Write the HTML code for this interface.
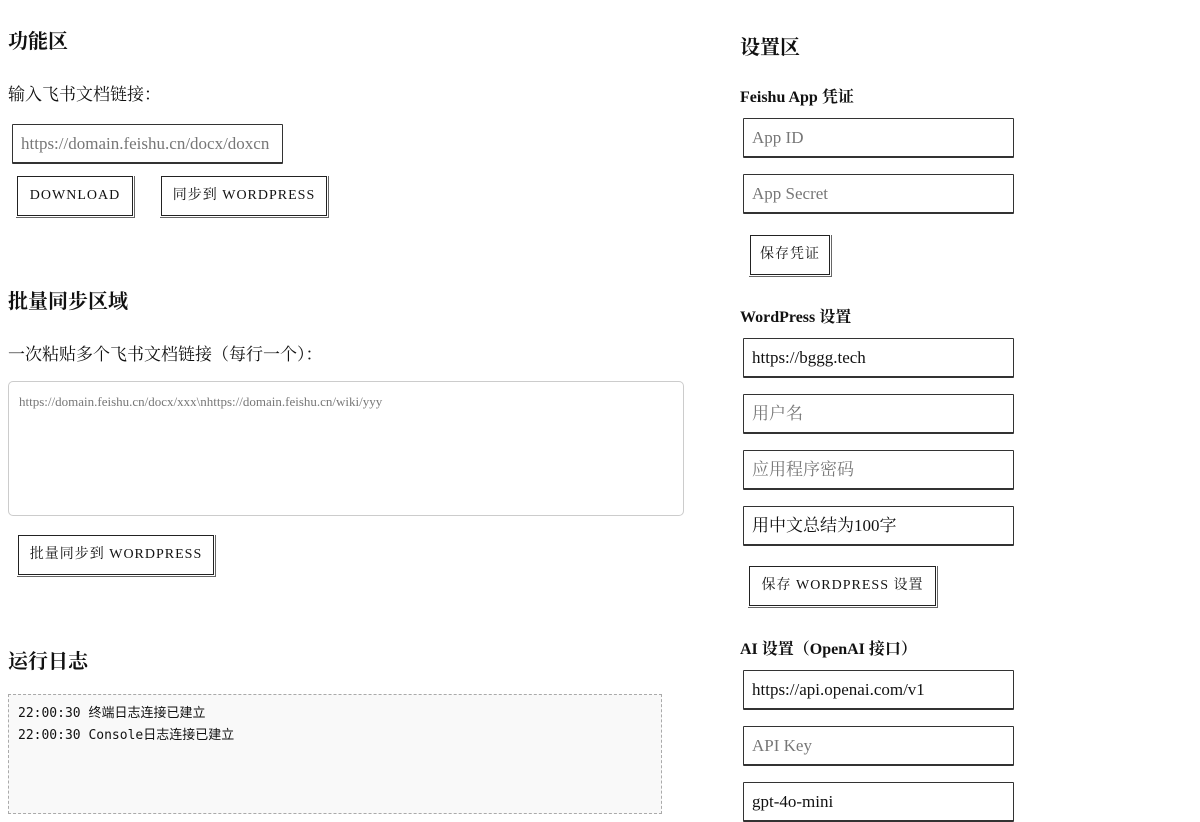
<!DOCTYPE html>
<html><head><meta charset="utf-8"><style>
body{margin:0;width:1200px;height:801px;overflow:hidden;background:#fff;position:relative;font-family:"Liberation Serif","Noto Serif CJK SC",serif;color:#111}
.a{position:absolute;white-space:nowrap}
h2{position:absolute;margin:0;font-size:20px;font-weight:bold;white-space:nowrap}
h3{position:absolute;margin:0;font-size:16px;font-weight:bold;white-space:nowrap}
.lbl{position:absolute;font-size:17px;white-space:nowrap}
.in{position:absolute;box-sizing:border-box;border:1.5px solid #333;border-bottom-width:2px;border-radius:1px;height:40px;font-size:17px;padding:0 8px;line-height:37px;color:#777;background:#fff}
.in.v{color:#111}
.btn{position:absolute;box-sizing:border-box;border:1.5px solid #222;height:40px;font-size:14px;letter-spacing:1px;line-height:38px;text-align:center;background:#fff}
.btn:after{content:"";position:absolute;left:-2px;top:-1px;right:-3px;bottom:-3px;border:1px solid #666;border-left:none;border-top:none;pointer-events:none}
</style></head><body>
<h2 style="left:8px;top:25px">功能区</h2>
<div class="lbl" style="left:8px;top:80px">输入飞书文档链接：</div>
<div class="in" style="left:12px;top:124px;width:271px;height:40px">https://domain.feishu.cn/docx/doxcn</div>
<div class="btn" style="left:17px;top:176px;width:116px">DOWNLOAD</div>
<div class="btn" style="left:161px;top:176px;width:166px">同步到 WORDPRESS</div>

<h2 style="left:8px;top:285px">批量同步区域</h2>
<div class="lbl" style="left:8px;top:340px">一次粘贴多个飞书文档链接（每行一个）：</div>
<div class="a" style="left:8px;top:381px;width:676px;height:135px;box-sizing:border-box;border:1px solid #ccc;border-radius:5px;font-size:13px;color:#777;padding:12px 10px">https://domain.feishu.cn/docx/xxx\nhttps://domain.feishu.cn/wiki/yyy</div>
<div class="btn" style="left:18px;top:535px;width:196px">批量同步到 WORDPRESS</div>

<h2 style="left:8px;top:645px">运行日志</h2>
<div class="a" style="left:8px;top:694px;width:654px;height:120px;box-sizing:border-box;border:1px dashed #aaa;background:#f9f9f9;font-family:'DejaVu Sans Mono','Noto Sans CJK SC',monospace;font-size:13px;line-height:22px;padding:8px 9px;color:#111">22:00:30 终端日志连接已建立<br>22:00:30 Console日志连接已建立</div>

<h2 style="left:740px;top:31px">设置区</h2>
<h3 style="left:740px;top:84px">Feishu App 凭证</h3>
<div class="in" style="left:743px;top:118px;width:271px">App ID</div>
<div class="in" style="left:743px;top:174px;width:271px">App Secret</div>
<div class="btn" style="left:750px;top:235px;width:80px">保存凭证</div>

<h3 style="left:740px;top:304px">WordPress 设置</h3>
<div class="in v" style="left:743px;top:338px;width:271px">https://bggg.tech</div>
<div class="in" style="left:743px;top:394px;width:271px">用户名</div>
<div class="in" style="left:743px;top:450px;width:271px">应用程序密码</div>
<div class="in v" style="left:743px;top:506px;width:271px">用中文总结为100字</div>
<div class="btn" style="left:749px;top:566px;width:187px">保存 WORDPRESS 设置</div>

<h3 style="left:740px;top:636px">AI 设置（OpenAI 接口）</h3>
<div class="in v" style="left:743px;top:670px;width:271px">https://api.openai.com/v1</div>
<div class="in" style="left:743px;top:726px;width:271px">API Key</div>
<div class="in v" style="left:743px;top:782px;width:271px">gpt-4o-mini</div>
</body></html>
